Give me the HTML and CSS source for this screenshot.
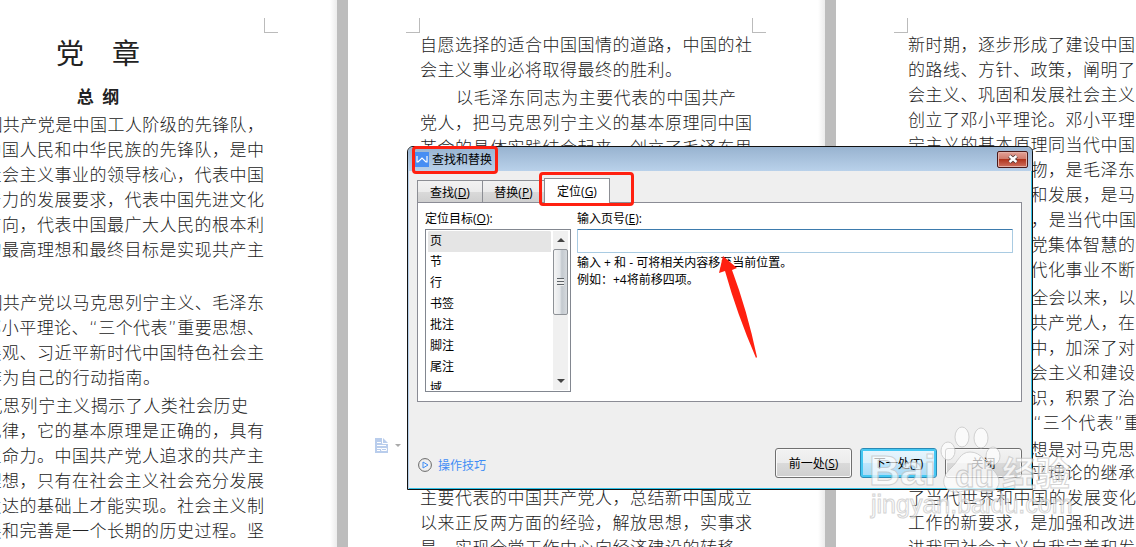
FILE: index.html
```
<!DOCTYPE html>
<html lang="zh-CN">
<head>
    <meta charset="UTF-8">
    <meta name="viewport" content="width=device-width, initial-scale=1.0">
    <title>查找和替换</title>
    <link rel="stylesheet" href="styles.css">
</head>
<body>
    <main class="workspace">
        <article class="page">
            <div class="marks"><i class="mark left"></i><i class="mark right"></i></div>
            <div class="text">
                <h1>党&emsp;章</h1>
                <h2>总&ensp;纲</h2>
                <p>
                    <span class="first">中国共产党是中国工人阶级的先锋队，</span>
                    <span>同时是中国人民和中华民族的先锋队，是中</span>
                    <span>国特色社会主义事业的领导核心，代表中国</span>
                    <span>先进生产力的发展要求，代表中国先进文化</span>
                    <span>的前进方向，代表中国最广大人民的根本利</span>
                    <span>益。党的最高理想和最终目标是实现共产主</span>
                    <span class="last">义。</span>
                </p>
                <p>
                    <span class="first">中国共产党以马克思列宁主义、毛泽东</span>
                    <span>思想、邓小平理论、“三个代表”重要思想、</span>
                    <span>科学发展观、习近平新时代中国特色社会主</span>
                    <span class="two-thirds">义思想作为自己的行动指南。</span>
                </p>
                <p>
                    <span class="first short">马克思列宁主义揭示了人类社会历史</span>
                    <span>发展的规律，它的基本原理是正确的，具有</span>
                    <span>强大的生命力。中国共产党人追求的共产主</span>
                    <span>义最高理想，只有在社会主义社会充分发展</span>
                    <span>和高度发达的基础上才能实现。社会主义制</span>
                    <span>度的发展和完善是一个长期的历史过程。坚</span>
                </p>
            </div>
        </article>

        <article class="page">
            <div class="marks"><i class="mark left"></i><i class="mark right"></i></div>
            <div class="text">
                <p>
                    <span>自愿选择的适合中国国情的道路，中国的社</span>
                    <span class="four-fifths">会主义事业必将取得最终的胜利。</span>
                </p>
                <p>
                    <span class="first short">以毛泽东同志为主要代表的中国共产</span>
                    <span>党人，把马克思列宁主义的基本原理同中国</span>
                    <span>革命的具体实践结合起来，创立了毛泽东思</span>
                </p>
                <p class="lower">
                    <span>主要代表的中国共产党人，总结新中国成立</span>
                    <span>以来正反两方面的经验，解放思想，实事求</span>
                    <span>是，实现全党工作中心向经济建设的转移，</span>
                </p>
            </div>
            <button class="paste" aria-label="粘贴选项">
                <svg width="26" height="16" viewBox="0 0 26 16">
                    <path d="M0 0h8l5 5v10H0z" fill="#b9cdec"/>
                    <path d="M7.500 0v5.500h5.500M2 4.500h4M2 7.500h9M2 10.500h4M2 12.500h3M6.500 10.500h5v2h-5z" fill="none" stroke="#fff"/>
                    <path d="M20 6h6l-3 3z" fill="#aaa"/>
                </svg>
            </button>
        </article>

        <article class="page">
            <div class="marks"><i class="mark left"></i><i class="mark right"></i></div>
            <div class="text">
                <p>
                    <span>新时期，逐步形成了建设中国特色社会主义</span>
                    <span>的路线、方针、政策，阐明了在中国建设社</span>
                    <span>会主义、巩固和发展社会主义的基本问题，</span>
                    <span>创立了邓小平理论。邓小平理论是马克思列</span>
                    <span>宁主义的基本原理同当代中国实践和时代的</span>
                    <span>特征相结合的产物，是毛泽东思想在新的历</span>
                    <span>史条件下的继承和发展，是马克思主义在中</span>
                    <span class="short">国发展的新阶段，是当代中国的马克思主</span>
                    <span>义，是中国共产党集体智慧的结晶，引导着</span>
                    <span class="four-fifths">我国社会主义现代化事业不断前进</span>
                </p>
                <p>
                    <span class="first">十三届四中全会以来，以江泽民同志为</span>
                    <span>主要代表的中国共产党人，在建设中国特色</span>
                    <span>社会主义的实践中，加深了对什么是社会主</span>
                    <span>义、怎样建设社会主义和建设什么样的党、</span>
                    <span>怎样建设党的认识，积累了治党治国新的宝</span>
                    <span>贵经验，形成了“三个代表”重要思想。“三</span>
                    <span>个代表<b class="wide">”</b>重要思想是对马克思列宁主义、毛</span>
                    <span>泽东思想、邓小平理论的继承和发展，反映</span>
                    <span class="short">了当代世界和中国的发展变化对党和国家</span>
                    <span>工作的新要求，是加强和改进党的建设、推</span>
                    <span>进我国社会主义自我完善和发展的强大理论</span>
                </p>
            </div>
        </article>

        <section class="dialog" role="dialog" aria-labelledby="dialog-title">
            <header class="titlebar">
                <svg class="logo" width="14" height="15" viewBox="0 0 14 15">
                    <path d="M0 0h14v15H0z" fill="#478ef3"/>
                    <path d="M2 4v6h1l4-4 4 4h1V4" fill="none" stroke="#fff" stroke-width="1.200"/>
                </svg>
                <span id="dialog-title">查找和替换</span>
                <button class="close" aria-label="关闭窗口">
                    <svg width="12" height="10" viewBox="0 0 12 10">
                        <path d="M2.500 2l7 6M9.500 2l-7 6" stroke="#4a3434" stroke-width="4"/>
                        <path d="M2.500 2l7 6M9.500 2l-7 6" stroke="#fff" stroke-width="2.400"/>
                    </svg>
                </button>
            </header>
            <div class="content">
                <nav class="tabs" role="tablist">
                    <button class="tab" role="tab">查找(<u>D</u>)</button>
                    <button class="tab" role="tab">替换(<u>P</u>)</button>
                    <button class="tab active" role="tab" aria-selected="true">定位(<u>G</u>)</button>
                </nav>
                <div class="panel">
                    <div class="target">
                        <label for="target">定位目标(<u>O</u>):</label>
                        <div class="listbox">
                            <select id="target" size="8">
                                <option selected>页</option>
                                <option>节</option>
                                <option>行</option>
                                <option>书签</option>
                                <option>批注</option>
                                <option>脚注</option>
                                <option>尾注</option>
                                <option>域</option>
                            </select>
                            <div class="scrollbar" aria-hidden="true">
                                <i class="arrow up"></i>
                                <div class="thumb"><i></i></div>
                                <i class="arrow down"></i>
                            </div>
                        </div>
                    </div>
                    <div class="number">
                        <label for="page-number">输入页号(<u>E</u>):</label>
                        <input id="page-number" type="text">
                        <p>输入 + 和 - 可将相关内容移至当前位置。<br>例如：+4将前移四项。</p>
                    </div>
                </div>
                <footer class="actions">
                    <a class="tips" href="#">
                        <svg width="14" height="14" viewBox="0 0 14 14" fill="none">
                            <circle cx="7" cy="7" r="6.400" stroke="#666"/>
                            <path d="M5 4l5 3-5 3z" stroke="#3f8df5"/>
                        </svg>
                        操作技巧
                    </a>
                    <button class="btn">前一处(<u>S</u>)</button>
                    <button class="btn default">下一处(<u>T</u>)</button>
                    <button class="btn">关闭</button>
                </footer>
            </div>
            <i class="box box-title"></i>
            <i class="box box-tab"></i>
            <svg class="pointer" width="40" height="104" viewBox="0 0 40 104">
                <path d="M6 1L20 13L15 15Q30 55 40 102L39 103Q20 59 8 16L2 18z" fill="#ff2010"/>
            </svg>
        </section>

        <svg class="watermark" width="220" height="110" viewBox="0 0 220 110">
            <g class="brand">
                <ellipse cx="98" cy="21" rx="7" ry="10"/>
                <ellipse cx="117" cy="22" rx="7" ry="10"/>
                <ellipse cx="84" cy="35" rx="7" ry="9"/>
                <ellipse cx="129" cy="40" rx="7" ry="9"/>
                <path d="M106 36c-10 0-12 10-19 16-13 12-7 24 5 24 7 0 9-2 15-2s9 2 16 2c13 0 16-13 6-22-8-7-11-18-23-18z"/>
                <text x="5" y="69" class="bai">Bai</text>
                <text x="91" y="71" class="du">du</text>
                <text x="138" y="70" class="jingyan">经验</text>
                <text x="7" y="97" class="url">jingyan.baidu.com</text>
            </g>
        </svg>
    </main>
</body>
</html>
```
FILE: styles.css
```
* {
    box-sizing: border-box;
}
body {
    margin: 0;
    overflow: hidden;
    font-family: "Open Sans", "Noto Sans CJK SC", sans-serif;
    font-size: 12px;
    color: #000;
}
button, input, select {
    font: inherit;
    color: inherit;
}
.workspace {
    position: relative;
    display: flex;
    gap: 11px;
    height: 100vh;
    overflow: hidden;
    background-color: #bdbdbd;
}

/* document pages */
.page {
    position: relative;
    flex: 0 0 477px;
    padding: 18px 59px 0 58px;
    background: linear-gradient(to left, #ececec, #fff 7px);
}
.page:first-child {
    margin-left: -140px;
}
.marks {
    display: flex;
    justify-content: space-between;
}
.mark {
    width: 14px;
    height: 15px;
    border-bottom: 1px solid #bbb;
}
.mark.left {
    border-right: 1px solid #bbb;
}
.mark.right {
    border-left: 1px solid #bbb;
}
.text {
    padding: 0 14px;
    font-family: "DejaVu Sans", "Noto Sans CJK SC", sans-serif;
    font-size: 17px;
    font-weight: 300;
    line-height: 25px;
    color: #222;
}
.text h1 {
    margin: 0;
    font-family: "Noto Sans CJK SC", sans-serif;
    font-size: 28px;
    font-weight: 400;
    line-height: 38px;
    text-align: center;
}
.text h2 {
    margin: 10px 0 0;
    font-size: 17px;
    font-weight: 700;
    line-height: 32px;
    text-align: center;
}
.text p {
    margin: 0 0 3px;
}
.text span {
    display: block;
    height: 25px;
    white-space: nowrap;
    text-align: justify;
    text-align-last: justify;
}
.text .first {
    padding-left: 36px;
}
.text .short {
    padding-right: 16px;
}
.text .last {
    text-align-last: left;
}
.text .two-thirds {
    padding-right: 104px;
}
.text .four-fifths {
    padding-right: 70px;
}
.text .lower {
    margin-top: 325px;
}
.wide {
    font-family: "Noto Sans CJK SC", sans-serif;
    font-weight: 300;
}
.paste {
    position: absolute;
    left: 27px;
    top: 438px;
    padding: 0;
    border: none;
    background: none;
}
.paste svg {
    display: block;
}

/* dialog */
.dialog {
    position: absolute;
    left: 407px;
    top: 146px;
    width: 626px;
    border: 1px solid #111;
    border-radius: 6px 6px 0 0;
    background-color: #efefef;
    box-shadow: inset 1px 0 #b9d1ea, inset -1px -1px #35c3e8;
}
.titlebar {
    display: flex;
    align-items: center;
    gap: 3px;
    height: 24px;
    padding: 0 4px 0 7px;
    border-radius: 5px 5px 0 0;
    background: linear-gradient(#98b3d0, #b9d1ea);
}
.close {
    display: flex;
    align-items: center;
    justify-content: center;
    width: 31px;
    height: 17px;
    margin-left: auto;
    padding: 0;
    border: 1px solid #4a1a1a;
    border-radius: 2px;
    background: linear-gradient(#e3a197 0%, #d07c6d 45%, #b0341d 50%, #cf7160 100%);
    box-shadow: inset 0 0 0 1px #e4b0a6;
}
.content {
    padding: 7px 10px 11px 9px;
}
.tabs {
    display: flex;
    align-items: flex-end;
    height: 24px;
}
.tab {
    height: 22px;
    width: 65px;
    padding: 0;
    border: 1px solid #8c8e94;
    border-bottom: none;
    border-right-width: 0;
    background: linear-gradient(#f2f2f2, #ebebeb 50%, #dadada 50%, #cfcfcf);
}
.tab + .tab {
    width: 62px;
}
.tab.active {
    position: relative;
    width: 66px;
    height: 25px;
    margin-bottom: -1px;
    border-right-width: 1px;
    background: #fff;
}
.panel {
    display: flex;
    gap: 6px;
    height: 200px;
    padding: 7px 8px 9px 7px;
    border: 1px solid #8b8c95;
    background-color: #fff;
}
.panel label {
    display: block;
    line-height: 18px;
}
.listbox {
    display: flex;
    width: 146px;
    height: 163px;
    margin-top: 1px;
    padding: 1px 2px;
    border: 1px solid #828790;
}
.listbox select {
    flex: 1;
    height: 159px;
    padding: 0;
    border: none;
    outline: none;
    overflow: hidden;
    scrollbar-width: none;
    background: #fff;
}
.listbox option {
    height: 21px;
    min-height: 21px;
    padding: 0 2px;
    line-height: 21px;
}
.listbox option:checked {
    background: #e5e5e5 linear-gradient(#e5e5e5, #e5e5e5);
    color: #000;
}
.scrollbar {
    display: flex;
    flex-direction: column;
    width: 15px;
    margin-left: 2px;
    background-color: #f0f0f0;
}
.arrow {
    height: 18px;
    padding: 7px 4px;
}
.arrow::before {
    content: "";
    display: block;
    width: 0;
    border: 4px solid transparent;
}
.arrow.up::before {
    border-top: none;
    border-bottom-color: #444;
}
.arrow.down {
    margin-top: auto;
}
.arrow.down::before {
    border-bottom: none;
    border-top-color: #444;
}
.thumb {
    display: flex;
    align-items: center;
    justify-content: center;
    height: 66px;
    border: 1px solid #8e9297;
    border-radius: 2px;
    background: linear-gradient(to right, #f5f5f5, #e4e7ea 45%, #c3c9cf 60%, #d6dade);
}
.thumb i {
    width: 7px;
    height: 8px;
    background: repeating-linear-gradient(#5d6368 0 1px, #eee 1px 3px);
}
.number {
    flex: 1;
}
.number input {
    display: block;
    width: 100%;
    height: 24px;
    margin-top: 1px;
    padding: 0 4px;
    border: 1px solid #a9cbe2;
    border-top-color: #3d7bad;
    border-radius: 1px;
    background: #fff;
}
.number p {
    margin: 1px 0 0;
    line-height: 17px;
}
.actions {
    display: flex;
    align-items: center;
    gap: 8px;
    padding-top: 46px;
}
.tips {
    display: flex;
    align-items: center;
    gap: 6px;
    margin: 4px auto 0 1px;
    color: #3f8df5;
    text-decoration: none;
}
.btn {
    width: 77px;
    height: 30px;
    padding: 0;
    border: 1px solid #707070;
    border-radius: 3px;
    background: linear-gradient(#f2f2f2, #ebebeb 50%, #dadada 50%, #cfcfcf);
    box-shadow: inset 0 0 0 1px #fafafa;
}
.btn.default {
    border-color: #2a8ab5;
    background: linear-gradient(#eaf6fd, #d9f0fc 50%, #bee6fd 50%, #a7d9f5);
    box-shadow: inset 0 0 0 2px #45c8f3;
}

/* annotations over the dialog */
.box {
    position: absolute;
    border: 3px solid #ff2010;
    border-radius: 4px;
}
.box-title {
    left: 4px;
    top: -1px;
    width: 86px;
    height: 28px;
}
.box-tab {
    left: 131px;
    top: 25px;
    width: 95px;
    height: 34px;
}
.pointer {
    position: absolute;
    left: 309px;
    top: 108px;
}

/* watermark */
.watermark {
    position: absolute;
    left: 864px;
    top: 416px;
    pointer-events: none;
}
.brand {
    fill: #fff;
    stroke: #c4c4c4;
    stroke-width: 1px;
    opacity: 0.7;
    font-family: "Liberation Sans", "Noto Sans CJK SC", sans-serif;
    font-weight: 700;
}
.bai {
    font-size: 43px;
}
.du {
    font-size: 32px;
}
.jingyan {
    font-size: 34px;
}
.url {
    font-size: 25px;
    font-weight: 400;
}
```
